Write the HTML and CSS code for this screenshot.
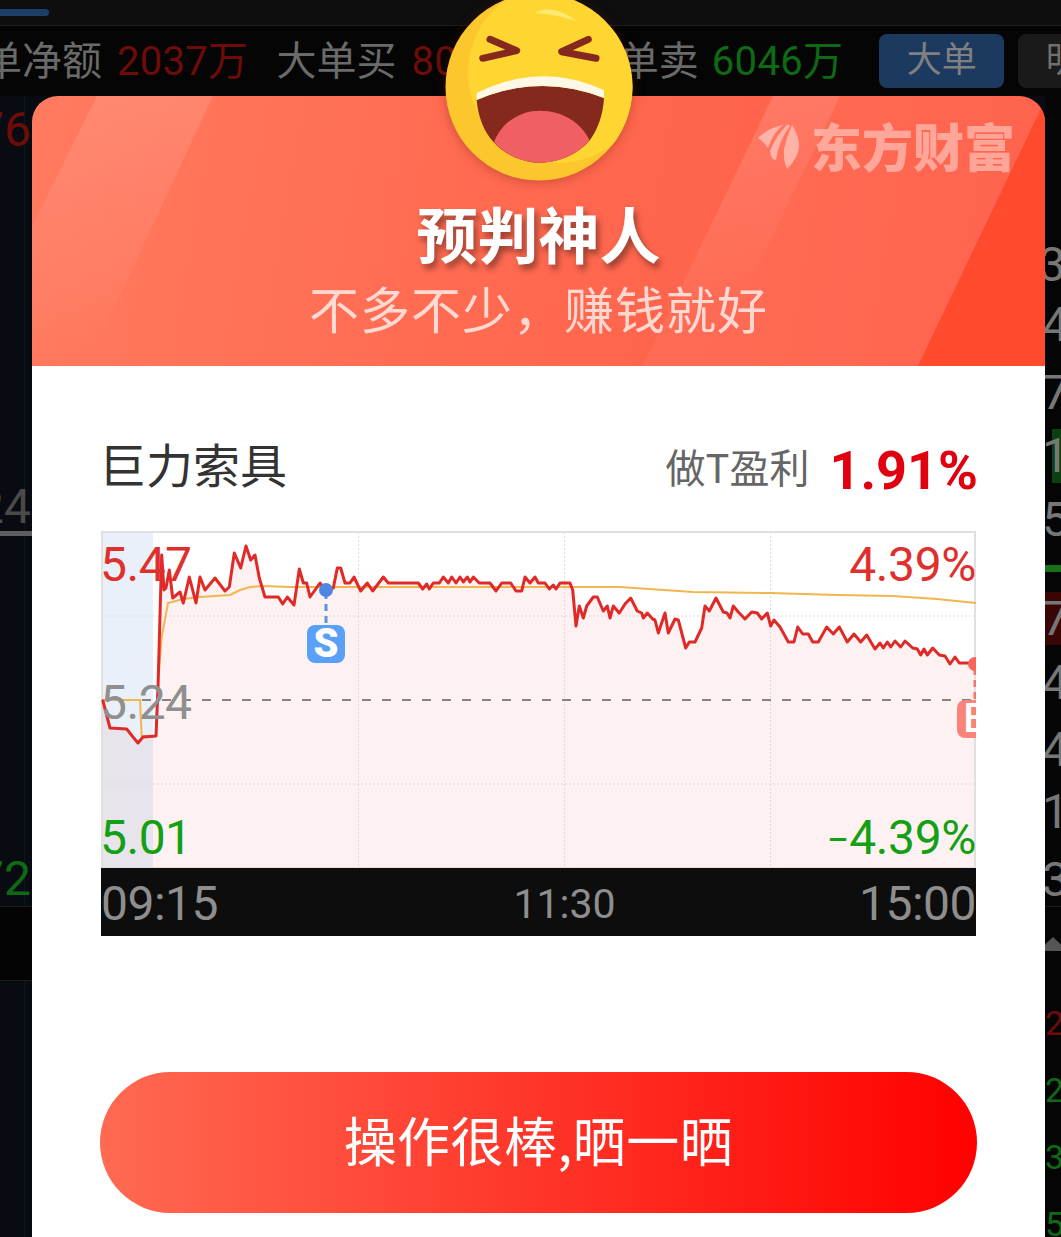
FILE: index.html
```html
<!DOCTYPE html>
<html lang="zh">
<head>
<meta charset="utf-8">
<title>预判神人</title>
<link rel="stylesheet" href="styles.css">
</head>
<body>
<div class="app">
  <div class="topbar"><span class="tab-mark"></span></div>
  <div class="stats">
    <span class="stat-label">大单净额</span><span class="stat-value up">2037万</span>
    <span class="stat-label s2">大单买</span><span class="stat-value up">8083万</span>
    <span class="stat-label s3">大单卖</span><span class="stat-value down">6046万</span>
    <span class="seg active">大单</span><span class="seg">明细</span>
  </div>
  <div class="content">
    <div class="side-left">
      <div class="l-row r1 up">76</div>
      <div class="l-row r2 muted">24</div>
      <div class="l-bar"></div>
      <div class="l-row r3 down">72</div>
      <div class="l-band"></div>
    </div>
    <div class="main-gap"></div>
    <div class="side-right">
      <div class="r-row h-a">3.</div>
      <div class="r-row h-b">4</div>
      <div class="r-row h-c">7</div>
      <div class="r-row h-d green-cell">1</div>
      <div class="r-row h-e">5</div>
      <div class="r-bar"></div>
      <div class="r-row h-f red-cell">7</div>
      <div class="r-row h-g">4</div>
      <div class="r-row h-h">4.</div>
      <div class="r-row h-i">1.</div>
      <div class="r-row h-j">3</div>
      <div class="r-tri"></div>
      <div class="r-small first up">24</div>
      <div class="r-small down">24</div>
      <div class="r-small down">38</div>
      <div class="r-small down">54</div>
    </div>
  </div>
</div>

<div class="modal">
  <div class="hero">
    <svg class="hero-art" viewBox="0 0 1013 270" aria-hidden="true">
      <defs>
        <linearGradient id="fadeA" x1="0" y1="0" x2="0" y2="1">
          <stop offset="0" stop-color="#fff" stop-opacity=".12"/>
          <stop offset="1" stop-color="#fff" stop-opacity="0"/>
        </linearGradient>
        <linearGradient id="fadeB" x1="0" y1="0" x2="0" y2="1">
          <stop offset="0" stop-color="#fff" stop-opacity=".1"/>
          <stop offset=".8" stop-color="#fff" stop-opacity="0"/>
        </linearGradient>
      </defs>
      <polygon points="65,0 181,0 55,270 0,270 0,131" fill="url(#fadeA)"/>
      <polygon points="741,0 808,0 678,270 611,270" fill="url(#fadeB)"/>
      <polygon points="741,0 1015,0 886,270 611,270" fill="#fff" fill-opacity=".05"/>
      <polygon points="1015,0 1013,270 886,270" fill="#ff4a2e"/>
    </svg>
    <div class="brand">
      <svg class="brand-icon" viewBox="0 0 44 46" aria-hidden="true">
        <path d="M1 14 Q11 4 26 1 Q16 9 11 24 Q6 17 1 14 Z"/>
        <path d="M31 0 Q20 10 13 27 Q14 36 19 36 Q22 16 33 2 Z"/>
        <path d="M35 1 Q30 12 27 25 Q26 36 30 45 Q43 32 42 19 Q40 8 35 1 Z"/>
      </svg>
      <span>东方财富</span>
    </div>
    <h1 class="hero-title">预判神人</h1>
    <p class="hero-sub">不多不少，赚钱就好</p>
  </div>

  <div class="sheet">
    <div class="stock-row">
      <span class="stock-name">巨力索具</span>
      <span class="profit"><span class="profit-label">做T盈利</span><b class="profit-value">1.91%</b></span>
    </div>

    <div class="chart">
      <svg class="chart-svg" viewBox="101 531 875 337" aria-hidden="true">
        <rect x="101" y="532" width="52" height="336" fill="#e9f0f9"/>
        <polygon class="area" points="102.7,700 110,728 126.7,729 133,737 138,743 143,737 156,736 158,687 161.7,555 164,590 166,588 169.3,570 172.7,598 180,592 183.3,603 189.3,577 196,603 200,577 205,590 215,578 225,591 229.3,587 234.3,553 240.7,568 246,546 250.7,560 255,555 259.3,578 265,597 278.3,597 282.7,604 287.3,597 294,605 299.3,569 303.3,583 306.7,583 310,597 320,583 326.7,592 333.3,588 337.3,568 340.7,568 345,583 350,583 354,577 360.7,591 367.3,583 372.7,591 383.3,577 388.3,583 418.3,583 422.7,589 426.7,584 429.3,589 433.3,583 439.3,583 443.3,577 448.3,583 451.7,577 456,583 460,577 463.3,582 467.3,577 470,582 473.3,577 479.3,583 490,583 496,591 501.7,583 510.7,583 516,591 521.7,591 525,577 530,583 535,577 538.3,583 545,583 549.3,589 553.3,585 556,589 560,583 570,583 572.7,590 576,626 579.3,606 583.3,618 586.7,606 593.3,597 597.3,597 603.3,611 607.3,606 610,618 613.3,606 619.3,613 625,604 630.7,598 637.3,611 641.7,613 643.3,618 647.3,613 652.7,619 655,620 658.3,633 665,613 668.3,633 675,619 678.3,620 685.7,648 689.3,642 695,642 701.7,628 705,606 709.3,611 716,598 723.3,612 727,613 730,618 733.3,606 738.3,612 745,619 751.7,612 757.3,613 761.7,619 767.3,613 770.7,626 774,620 780,627 788.3,642 794,642 797.7,627 802.7,634 808.3,634 812.7,642 818.3,642 826.7,627 833.3,634 839.3,627 847.3,642 854,634 860.7,642 866.7,635 875,649 880,643 883.3,648 887.3,642 890.7,647 895,641 900.7,647 905,641 912.7,648 917.3,649 920.7,655 924,649 927.3,655 932.7,648 939.3,655 945,656 950,664 955,657 959.3,663 976,663 976,868 102.7,868"/>
        <g class="grid">
          <line x1="101" y1="616" x2="976" y2="616"/>
          <line x1="101" y1="784" x2="976" y2="784"/>
          <line x1="358.5" y1="532" x2="358.5" y2="868"/>
          <line x1="564.5" y1="532" x2="564.5" y2="868"/>
          <line x1="770.5" y1="532" x2="770.5" y2="868"/>
        </g>
        <rect class="frame" x="102" y="532" width="873" height="336"/>
        <line class="base" x1="102" y1="700" x2="976" y2="700"/>
        <polyline class="avg" points="103,700 140,700 141.7,736 156,736 158,683 161.7,637 168,603 183,599 200,597 230,595 240,590 250,587 263,586 290,587 323,587 570,587 593,587 620,587 693,592 770,593 837,595 893,596 937,599 976,603"/>
        <polyline class="price" points="102.7,700 110,728 126.7,729 133,737 138,743 143,737 156,736 158,687 161.7,555 164,590 166,588 169.3,570 172.7,598 180,592 183.3,603 189.3,577 196,603 200,577 205,590 215,578 225,591 229.3,587 234.3,553 240.7,568 246,546 250.7,560 255,555 259.3,578 265,597 278.3,597 282.7,604 287.3,597 294,605 299.3,569 303.3,583 306.7,583 310,597 320,583 326.7,592 333.3,588 337.3,568 340.7,568 345,583 350,583 354,577 360.7,591 367.3,583 372.7,591 383.3,577 388.3,583 418.3,583 422.7,589 426.7,584 429.3,589 433.3,583 439.3,583 443.3,577 448.3,583 451.7,577 456,583 460,577 463.3,582 467.3,577 470,582 473.3,577 479.3,583 490,583 496,591 501.7,583 510.7,583 516,591 521.7,591 525,577 530,583 535,577 538.3,583 545,583 549.3,589 553.3,585 556,589 560,583 570,583 572.7,590 576,626 579.3,606 583.3,618 586.7,606 593.3,597 597.3,597 603.3,611 607.3,606 610,618 613.3,606 619.3,613 625,604 630.7,598 637.3,611 641.7,613 643.3,618 647.3,613 652.7,619 655,620 658.3,633 665,613 668.3,633 675,619 678.3,620 685.7,648 689.3,642 695,642 701.7,628 705,606 709.3,611 716,598 723.3,612 727,613 730,618 733.3,606 738.3,612 745,619 751.7,612 757.3,613 761.7,619 767.3,613 770.7,626 774,620 780,627 788.3,642 794,642 797.7,627 802.7,634 808.3,634 812.7,642 818.3,642 826.7,627 833.3,634 839.3,627 847.3,642 854,634 860.7,642 866.7,635 875,649 880,643 883.3,648 887.3,642 890.7,647 895,641 900.7,647 905,641 912.7,648 917.3,649 920.7,655 924,649 927.3,655 932.7,648 939.3,655 945,656 950,664 955,657 959.3,663 976,663"/>
        <line class="buy-link" x1="326" y1="592" x2="326" y2="625"/>
        <circle cx="326" cy="590" r="7" fill="#4f86df"/>
        <line class="sell-link" x1="975" y1="668" x2="975" y2="700"/>
        <circle cx="975" cy="664" r="7" fill="#f7655b"/>
      </svg>
      <span class="tag tag-high">5.47</span>
      <span class="tag tag-mid">5.24</span>
      <span class="tag tag-low">5.01</span>
      <span class="tag tag-pct tag-pct-high">4.39%</span>
      <span class="tag tag-pct tag-pct-low"><span class="minus">−</span>4.39%</span>
      <span class="marker marker-s">S</span>
      <span class="marker marker-b">B</span>
    </div>

    <div class="axis">
      <span class="axis-edge">09:15</span>
      <span class="axis-mid">11:30</span>
      <span class="axis-edge">15:00</span>
    </div>

    <button class="share" type="button">操作很棒,晒一晒</button>
  </div>

  <svg class="emoji" viewBox="0 0 188 188" aria-hidden="true">
    <defs>
      <clipPath id="face"><circle cx="94" cy="94" r="93.5"/></clipPath>
    </defs>
    <g clip-path="url(#face)">
      <rect width="188" height="188" fill="#fcc72d"/>
      <circle cx="113" cy="80" r="90" fill="#ffd531"/>
    </g>
    <path d="M90 20 Q108 10 133 29 Q115 22 90 20 Z" fill="#ffe96f"/>
    <path class="eye" d="M45 46.3 L71.7 57.7 L37.7 65.3"/>
    <path class="eye" d="M143.3 46.3 L116.7 58.7 L151 65.3"/>
    <path d="M31.7 107 Q95 80 159 105 C158 122 153 136 145 147 C133 162 112 169.7 95 169.7 C78 169.7 60 162 48.3 148.7 C40 140 33 125 31.7 107 Z" fill="#85291f"/>
    <path d="M49 149 C56 131 73 117.7 95 117.7 C118 117.7 136 130 144.5 147 C133 162 112 169.7 95 169.7 C78 169.7 60 162 49 149 Z" fill="#f05f63"/>
    <path d="M31.7 100 Q95 68 159 97 L159 105 Q95 80 31.7 107 Z" fill="#fff8e6"/>
  </svg>
</div>
</body>
</html>
```
FILE: styles.css
```css
* { box-sizing: border-box; }
html, body { margin: 0; padding: 0; }
body {
  width: 1061px;
  height: 1237px;
  position: relative;
  overflow: hidden;
  background: #080c12;
  font-family: Roboto, "Noto Sans CJK SC", sans-serif;
}

/* dimmed page behind the dialog */
.app { display: flex; flex-direction: column; height: 1237px; }
.topbar {
  height: 26px;
  padding-top: 9px;
  background: #0e0e0e;
  border-bottom: 1px solid #1d1d1d;
}
.tab-mark {
  display: block;
  width: 49px;
  height: 7px;
  border-radius: 0 4px 4px 0;
  background: #1c3e68;
}
.stats {
  height: 70px;
  display: flex;
  align-items: center;
  background: #050505;
  font-size: 40px;
  white-space: nowrap;
  overflow: hidden;
  margin-left: -58px;
  width: 1119px;
}
.stat-label { color: #6a6a6a; margin: 0 15px 6px 0; }
.stat-label.s2 { margin-left: 28px; }
.stat-label.s3 { margin-left: 36px; margin-right: 13px; }
.stat-value { letter-spacing: .3px; margin-bottom: 6px; }
.up { color: #6d0c08; }
.down { color: #0e6a14; }
.muted { color: #4a4a4a; }
.seg {
  flex: none;
  height: 54px;
  line-height: 54px;
  padding: 0 27.5px;
  margin-left: 14px;
  border-radius: 8px;
  background: #1a1a1a;
  color: #6f6f6f;
  font-size: 35px;
}
.seg.active { margin-left: 36px; background: #1c3a60; color: #808080; }
.content { flex: 1; display: flex; min-height: 0; }
.side-left {
  width: 32px;
  display: flex;
  flex-direction: column;
  overflow: hidden;
  font-size: 48px;
  background: linear-gradient(#10151b, #10151b) 24px 0 / 1px 100% no-repeat;
}
.l-row {
  display: flex;
  justify-content: flex-end;
  padding-right: 1px;
  height: 50px;
  line-height: 50px;
  white-space: nowrap;
}
.r1 { margin-top: 9px; }
.r2 { margin-top: 328px; height: 48px; line-height: 48px; }
.l-bar { height: 5px; background: #5e5e5e; }
.r3 { margin-top: 318px; }
.l-band {
  flex: none;
  height: 75px;
  margin-top: 2px;
  background: #040404;
  border-top: 1px solid #1c1c1c;
  border-bottom: 1px solid #1c1c1c;
}
.main-gap { flex: 1; }
.side-right {
  width: 16px;
  display: flex;
  flex-direction: column;
  overflow: hidden;
  padding-top: 136px;
  background: #050505;
  color: #777;
  font-size: 48px;
  white-space: nowrap;
}
.r-row { flex: none; text-indent: -3px; }
.h-a { height: 62px; line-height: 66px; text-indent: -6px; }
.h-b { height: 62px; line-height: 62px; }
.h-c { height: 73px; line-height: 74px; }
.h-d { height: 54px; line-height: 54px; }
.h-e { height: 82px; line-height: 74px; }
.r-bar { height: 7px; margin-bottom: 20px; background: #1a6f1a; flex: none; }
.h-f { height: 53px; line-height: 53px; }
.h-g { height: 72px; line-height: 76px; }
.h-h { height: 64px; line-height: 66px; }
.h-i { height: 62px; line-height: 62px; }
.h-j { height: 64px; line-height: 74px; border-bottom: 1px solid #1c1c1c; }
.green-cell { background: linear-gradient(90deg, transparent 7px, #0c4012 7px); }
.red-cell { background: #3a0505; }
.r-tri {
  flex: none;
  width: 0;
  height: 0;
  margin: 30px 0 0 -7px;
  border-left: 15px solid transparent;
  border-right: 15px solid transparent;
  border-bottom: 14px solid #555;
}
.r-small { flex: none; height: 67px; line-height: 67px; font-size: 34px; }
.r-small.first { margin-top: 39px; }

/* dialog */
.modal {
  position: absolute;
  left: 32px;
  top: 96px;
  width: 1013px;
  height: 1141px;
  display: flex;
  flex-direction: column;
}
.hero {
  position: relative;
  height: 270px;
  flex: none;
  overflow: hidden;
  border-radius: 26px 26px 0 0;
  padding-top: 102px;
  text-align: center;
  background: linear-gradient(100deg, #ff7b60 0%, #ff6c52 40%, #ff5a44 100%);
}
.hero-art { position: absolute; left: 0; top: 0; width: 1013px; height: 270px; }
.brand {
  position: absolute;
  left: 725px;
  top: 24px;
  display: flex;
  align-items: center;
  gap: 10px;
  color: rgba(255, 255, 255, .42);
  font: 900 51px/50px "Noto Sans CJK SC", sans-serif;
}
.brand-icon { width: 44px; height: 46px; fill: rgba(255, 255, 255, .45); margin-top: 4px; }
.hero-title {
  position: relative;
  margin: 0;
  height: 70px;
  color: #fff;
  font: 700 61px/70px "Noto Sans CJK SC", sans-serif;
  text-shadow: 3px 5px 6px rgba(0, 0, 0, .4);
}
.hero-sub {
  position: relative;
  margin: 9px 0 0;
  height: 60px;
  color: rgba(255, 255, 255, .74);
  font: 400 50px/60px "Noto Sans CJK SC", sans-serif;
  letter-spacing: 1px;
}
.sheet {
  flex: 1;
  background: #fff;
  padding: 0 68px;
  display: flex;
  flex-direction: column;
}
.stock-row {
  flex: none;
  height: 165px;
  padding: 67px 0 0;
  display: flex;
  justify-content: space-between;
  align-items: flex-start;
}
.stock-name { color: #333; font: 400 47px/60px "Noto Sans CJK SC", sans-serif; margin-left: -1px; }
.profit { display: flex; align-items: center; height: 64px; margin: 1px -1px 0 0; }
.profit-label { color: #666; font: 400 40px/64px "Noto Sans CJK SC", sans-serif; }
.profit-value {
  margin: 10px 0 0 20px;
  color: #e0000f;
  font: 700 54px/64px Roboto, sans-serif;
}
.chart {
  position: relative;
  flex: none;
  width: 875px;
  height: 337px;
  margin-left: 1px;
  overflow: hidden;
  background: #fff;
}
.chart-svg { position: absolute; left: 0; top: 0; width: 875px; height: 337px; }
.area { fill: rgba(226, 60, 50, .065); }
.grid line { stroke: #dcdcdc; stroke-width: 1; stroke-dasharray: 2 2; }
.frame { fill: none; stroke: #e0e0e0; stroke-width: 2; }
.base { stroke: #8a8280; stroke-width: 2; stroke-dasharray: 9 11; }
.avg { fill: none; stroke: #f3b54e; stroke-width: 2; }
.price { fill: none; stroke: #e02a28; stroke-width: 3; stroke-linejoin: round; }
.buy-link { stroke: #5b92e8; stroke-width: 3; stroke-dasharray: 7 5; }
.sell-link { stroke: #f7756b; stroke-width: 3; stroke-dasharray: 7 5; }
.tag { position: absolute; font-size: 48px; line-height: 48px; letter-spacing: -.5px; white-space: nowrap; }
.tag-high { left: -1px; top: 10px; color: #e0302e; }
.tag-mid { left: -1px; top: 148px; color: #8f8f8f; }
.tag-low { left: -1px; top: 283px; color: #14a014; }
.tag-pct { letter-spacing: -.4px; right: 0; }
.tag-pct-high { top: 10px; color: #e0302e; }
.tag-pct-low { top: 283px; color: #14a014; }
.minus { font-size: 40px; }
.marker {
  position: absolute;
  width: 38px;
  height: 38px;
  border-radius: 8px;
  color: #fff;
  text-align: center;
}
.marker-s { left: 206px; top: 94px; background: #5ba0f8; font: 900 40px/38px Roboto, sans-serif; }
.marker-b { left: 856px; top: 169px; background: #fb8479; font: 500 40px/38px Roboto, sans-serif; }
.axis {
  flex: none;
  width: 875px;
  height: 68px;
  padding-top: 4px;
  margin-left: 1px;
  background: #0d0d0d;
  color: #8e8e8e;
  display: flex;
  justify-content: space-between;
  align-items: center;
  white-space: nowrap;
}
.axis-edge { font-size: 48px; line-height: 64px; letter-spacing: -.5px; }
.axis-mid { font-size: 41px; line-height: 64px; margin-left: 52px; }
.share {
  flex: none;
  width: 877px;
  height: 141px;
  margin-top: 136px;
  padding: 0 0 6px;
  border: 0;
  border-radius: 71px;
  background: linear-gradient(90deg, #ff6a52 0%, #ff0000 100%);
  color: #fff;
  font: 400 53px/135px "Noto Sans CJK SC", sans-serif;
  letter-spacing: .5px;
}
.emoji {
  position: absolute;
  left: 413px;
  top: -103px;
  width: 188px;
  height: 188px;
  overflow: visible;
  filter: drop-shadow(0 2px 6px rgba(120, 30, 10, .35));
}
.eye { fill: none; stroke: #85291f; stroke-width: 7; stroke-linecap: round; stroke-linejoin: round; }
```
